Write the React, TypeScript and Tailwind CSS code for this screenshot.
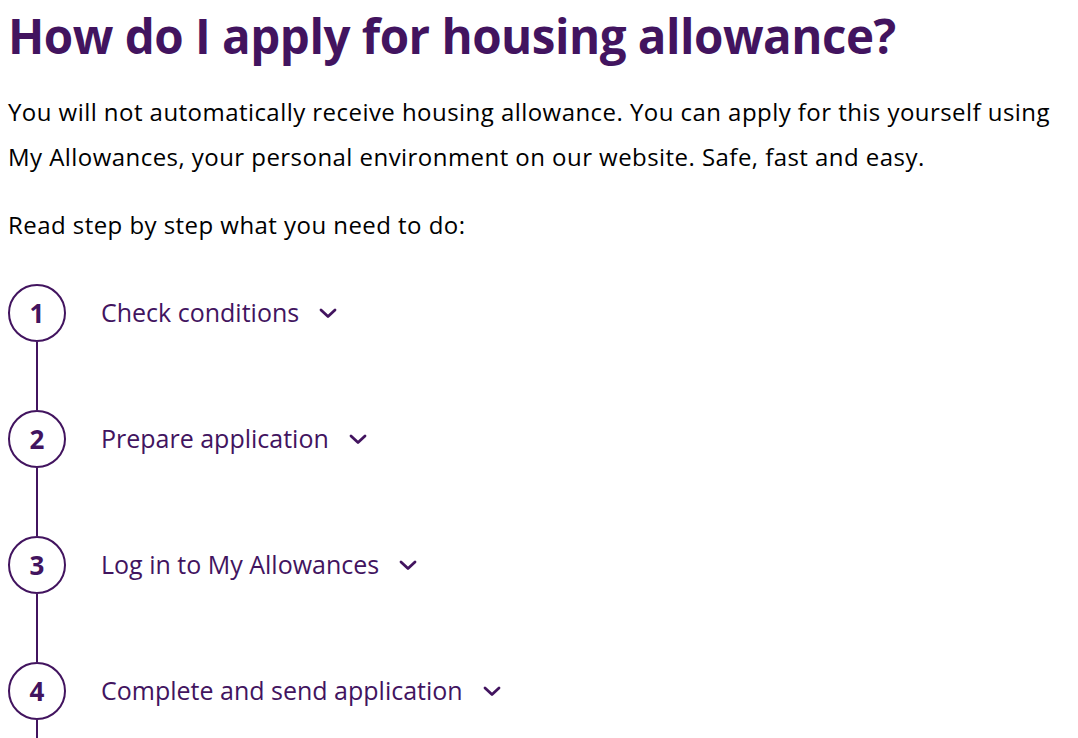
import React from "react";

const steps = [
  "Check conditions",
  "Prepare application",
  "Log in to My Allowances",
  "Complete and send application",
];

function Chevron() {
  return (
    <svg width="20" height="12" viewBox="0 0 20 12" fill="none" className="shrink-0">
      <path d="M3 3 L10 9.5 L17 3" stroke="#42145f" strokeWidth="2.8" strokeLinecap="round" strokeLinejoin="round" />
    </svg>
  );
}

export default function App() {
  return (
    <div className="w-[1078px] h-[738px] overflow-hidden bg-white pl-[8px] pt-[5px]" style={{ fontFamily: '"Open Sans", sans-serif' }}>
      <h1 className="text-[47.5px] leading-[62px] font-bold text-[#42145f] tracking-[-0.5px]">
        How do I apply for housing allowance?
      </h1>
      <p className="mt-[22px] text-[24px] leading-[45px] tracking-[0.45px] text-black">
        You will not automatically receive housing allowance. You can apply for this yourself using My Allowances, your personal environment on our website. Safe, fast and easy.
      </p>
      <p className="mt-[23px] text-[24px] leading-[45px] tracking-[0.45px] text-black">Read step by step what you need to do:</p>
      <div className="mt-[37px] flex flex-col">
        {steps.map((s, i) => (
          <div key={s} className="flex flex-col">
            <div className="flex items-center">
              <div className="w-[58px] h-[58px] rounded-full border-[2.5px] border-[#42145f] flex items-center justify-center text-[26px] font-bold text-[#42145f] shrink-0">
                {i + 1}
              </div>
              <span className="ml-[35px] text-[25px] text-[#42145f]">{s}</span>
              <span className="ml-[19px] flex items-center"><Chevron /></span>
            </div>
            <div className="ml-[28px] w-[2px] h-[68px] bg-[#42145f]" />
          </div>
        ))}
      </div>
    </div>
  );
}
